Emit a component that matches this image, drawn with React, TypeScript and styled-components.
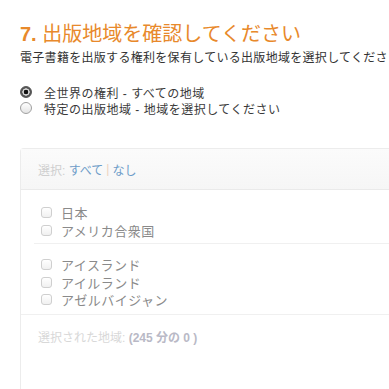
import React from "react";
import styled, { createGlobalStyle } from "styled-components";

const GlobalStyle = createGlobalStyle`
  body {
    margin: 0;
    background: #fff;
    font-family: "Liberation Sans", "Noto Sans CJK JP", sans-serif;
    color: #333;
    overflow: hidden;
  }
`;

const Page = styled.div`
  padding: 21px 0 0 20px;
  width: 369px;
  height: 368px;
  overflow: hidden;
`;

const Title = styled.h2`
  margin: 0;
  font-size: 20px;
  font-weight: normal;
  color: #e8892b;
  line-height: 26px;
  white-space: nowrap;
  b {
    font-weight: bold;
  }
`;

const Lead = styled.p`
  margin: 3px 0 0;
  font-size: 12px;
  line-height: 16px;
  color: #333;
  white-space: nowrap;
  letter-spacing: 0.3px;
`;

const RadioGroup = styled.div`
  margin-top: 18px;
  display: flex;
  flex-direction: column;
`;

const RadioRow = styled.label`
  display: flex;
  align-items: center;
  gap: 12px;
  height: 16px;
  font-size: 12px;
  color: #3a3a3a;
  white-space: nowrap;
  letter-spacing: 0.5px;
`;

const RadioDot = styled.span<{ $on?: boolean }>`
  width: 12px;
  height: 12px;
  border-radius: 50%;
  box-sizing: border-box;
  border: 1px solid ${(p) => (p.$on ? "#555" : "#a0a0a0")};
  background: ${(p) =>
    p.$on
      ? "radial-gradient(circle, #111 0 2px, #d8d8d8 2.6px 3.4px, #555 3.9px)"
      : "linear-gradient(#fff, #e4e4e4)"};
`;

const Box = styled.div`
  margin-top: 32px;
  border: 1px solid #ececec;
  border-right: none;
  border-bottom: none;
  border-radius: 4px 0 0 0;
  height: 260px;
`;

const BoxHead = styled.div`
  height: 40px;
  display: flex;
  align-items: center;
  padding-left: 17px;
  background: linear-gradient(#fbfbfb, #f6f6f6);
  border-bottom: 1px solid #eaeaea;
  font-size: 12px;
  color: #cfcfcf;
  white-space: nowrap;
`;

const Link = styled.span`
  color: #6d9cc8;
`;

const Pipe = styled.span`
  color: #edd3bd;
  margin: 0 3px;
`;

const Group = styled.div<{ $first?: boolean; $last?: boolean }>`
  margin-left: 13px;
  padding: ${(p) => (p.$first ? "14px" : "12px")} 0 4px 7px;
  border-bottom: 1px solid ${(p) => (p.$last ? "transparent" : "#f0f0f0")};
`;

const CheckRow = styled.label`
  display: flex;
  align-items: center;
  gap: 9px;
  height: 17.5px;
  font-size: 13px;
  color: #8a8a8a;
  white-space: nowrap;
  letter-spacing: 0.5px;
`;

const Check = styled.span`
  width: 11px;
  height: 11px;
  box-sizing: border-box;
  border: 1px solid #cfcfcf;
  border-radius: 3px;
  background: linear-gradient(#fff, #f0f0f0);
`;

const Footer = styled.div`
  border-top: 1px solid #f0f0f0;
  padding: 16px 0 0 17px;
  font-size: 12px;
  line-height: 14px;
  color: #d8d8d8;
  white-space: nowrap;
  b {
    color: #b9b9c6;
  }
`;

const groups = [
  ["日本", "アメリカ合衆国"],
  ["アイスランド", "アイルランド", "アゼルバイジャン"],
];

export default function App() {
  return (
    <>
      <GlobalStyle />
      <Page>
        <Title>
          <b>7.</b> 出版地域を確認してください
        </Title>
        <Lead>電子書籍を出版する権利を保有している出版地域を選択してくださ</Lead>
        <RadioGroup>
          <RadioRow>
            <RadioDot $on />
            全世界の権利 - すべての地域
          </RadioRow>
          <RadioRow>
            <RadioDot />
            特定の出版地域 - 地域を選択してください
          </RadioRow>
        </RadioGroup>
        <Box>
          <BoxHead>
            選択:&nbsp;<Link>すべて</Link>
            <Pipe>|</Pipe>
            <Link>なし</Link>
          </BoxHead>
          {groups.map((g, i) => (
            <Group key={i} $first={i === 0} $last={i === groups.length - 1}>
              {g.map((name) => (
                <CheckRow key={name}>
                  <Check />
                  {name}
                </CheckRow>
              ))}
            </Group>
          ))}
          <Footer>
            選択された地域: <b>(245 分の 0 )</b>
          </Footer>
        </Box>
      </Page>
    </>
  );
}
